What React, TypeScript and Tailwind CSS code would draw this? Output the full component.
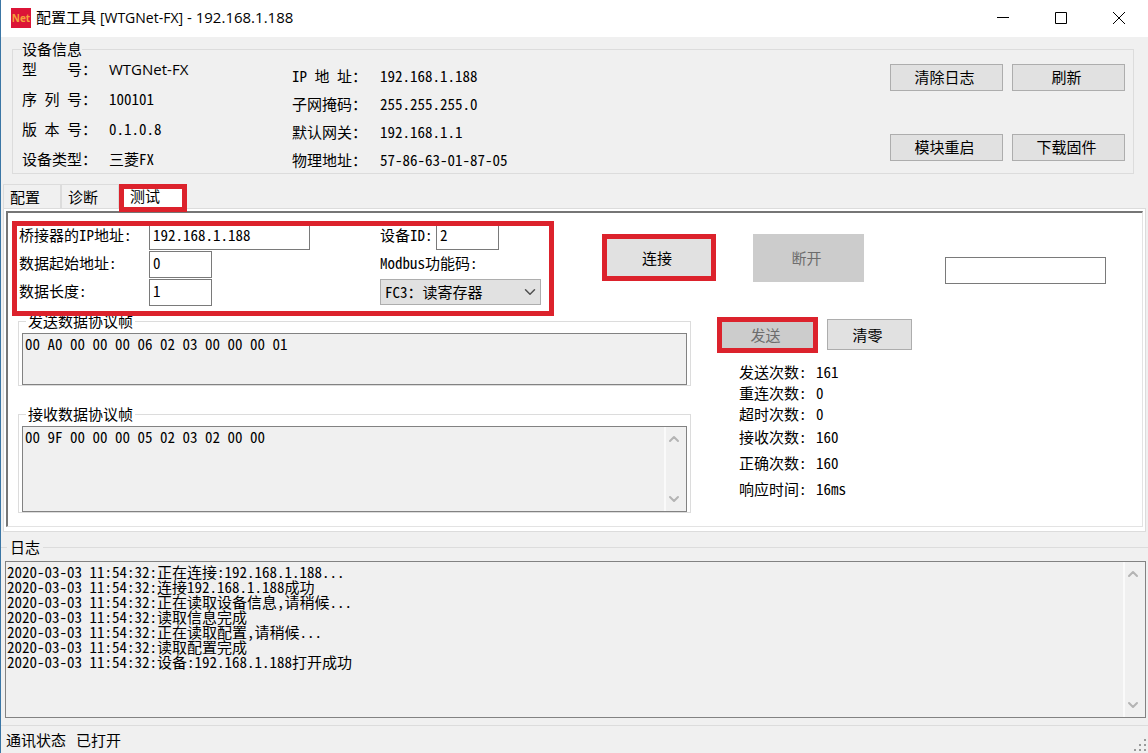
import { useState } from 'react'
import { ChevronDown, ChevronUp } from 'lucide-react'

const deviceLeft = [
  { label: '型    号：', value: 'WTGNet-FX', ui: true },
  { label: '序 列 号：', value: '100101' },
  { label: '版 本 号：', value: '0.1.0.8' },
  { label: '设备类型：', value: '三菱FX' },
]

const deviceRight = [
  { label: 'IP 地 址：', value: '192.168.1.188' },
  { label: '子网掩码：', value: '255.255.255.0' },
  { label: '默认网关：', value: '192.168.1.1' },
  { label: '物理地址：', value: '57-86-63-01-87-05' },
]

const sendStats = [
  { label: '发送次数:', value: '161' },
  { label: '重连次数:', value: '0' },
  { label: '超时次数:', value: '0' },
]

const receiveStats = [
  { label: '接收次数:', value: '160' },
  { label: '正确次数:', value: '160' },
  { label: '响应时间:', value: '16ms' },
]

const logLines = [
  '2020-03-03 11:54:32:正在连接:192.168.1.188...',
  '2020-03-03 11:54:32:连接192.168.1.188成功',
  '2020-03-03 11:54:32:正在读取设备信息,请稍候...',
  '2020-03-03 11:54:32:读取信息完成',
  '2020-03-03 11:54:32:正在读取配置,请稍候...',
  '2020-03-03 11:54:32:读取配置完成',
  '2020-03-03 11:54:32:设备:192.168.1.188打开成功',
]

const inputClass = 'h-[27px] border border-[#7a7a7a] bg-white px-[3px] pb-1 outline-none'
const buttonClass = 'border border-[#adadad] bg-[#e1e1e1] pr-1 hover:bg-[#e5f1fb]'

// Red frame drawn over the part of the window that needs attention
function Highlight() {
  return <span className="pointer-events-none absolute inset-0 z-10 border-[5px] border-[#dc222c]" />
}

function ScrollBar() {
  return (
    <div className="flex w-[22px] shrink-0 flex-col items-center justify-between border-l-2 border-[#fafafa] py-1 pr-1 text-[#b4b4b4]">
      <ChevronUp className="h-4 w-4" strokeWidth={3} />
      <ChevronDown className="h-4 w-4" strokeWidth={3} />
    </div>
  )
}

function Stats({ rows, className }: { rows: { label: string; value: string }[]; className: string }) {
  return (
    <dl className={className}>
      {rows.map((r) => (
        <div key={r.label} className="flex">
          <dt className="w-[77px]">{r.label}</dt>
          <dd>{r.value}</dd>
        </div>
      ))}
    </dl>
  )
}

export default function App() {
  const [tab, setTab] = useState('测试')
  const [ip, setIp] = useState('192.168.1.188')
  const [start, setStart] = useState('0')
  const [length, setLength] = useState('1')
  const [deviceId, setDeviceId] = useState('2')

  return (
    <div className="flex min-h-screen flex-col border-l border-[#3b76a5] bg-[#f0f0f0] text-[15px] leading-5 text-black [font-family:'Noto_Sans_Mono_CJK_SC','Liberation_Mono','Noto_Sans_CJK_SC',monospace]">
      {/* Title bar */}
      <header className="flex h-[37px] items-center bg-white pb-[2px] pl-[10px] [font-family:'Open_Sans','Noto_Sans_CJK_SC',sans-serif]">
        <span className="flex h-5 w-5 items-center justify-center bg-[#dc1437] text-[10px] font-bold text-[#f5a03c]">Net</span>
        <h1 className="ml-[5px] flex-1">
          配置工具 <span className="text-[14px]">[WTGNet-FX]</span> - 192.168.1.188
        </h1>
        <button type="button" aria-label="最小化" className="flex h-full w-[58px] items-center justify-center">
          <svg width="12" height="12" viewBox="0 0 12 12" stroke="black"><path d="M0 5.5H12" /></svg>
        </button>
        <button type="button" aria-label="最大化" className="flex h-full w-[58px] items-center justify-center">
          <svg width="12" height="12" viewBox="0 0 12 12" fill="none" stroke="black"><path d="M.5 .5H11.5V11.5H.5Z" /></svg>
        </button>
        <button type="button" aria-label="关闭" className="flex h-full w-[58px] items-center justify-center">
          <svg width="12" height="12" viewBox="0 0 12 12" stroke="black"><path d="M0 0L12 12M12 0L0 12" /></svg>
        </button>
      </header>

      {/* Device info */}
      <fieldset className="mr-[14px] ml-[11px] mt-[2px] flex h-[135px] border border-[#dcdcdc] pr-2 pl-[9px]">
        <legend>设备信息</legend>
        <dl className="w-[270px] space-y-[10px]">
          {deviceLeft.map((r) => (
            <div key={r.value} className="flex">
              <dt className="w-[87px] whitespace-pre">{r.label}</dt>
              <dd className={r.ui ? "[font-family:'Open_Sans',sans-serif]" : ''}>{r.value}</dd>
            </div>
          ))}
        </dl>
        <dl className="flex-1 space-y-2 pt-[7px]">
          {deviceRight.map((r) => (
            <div key={r.value} className="flex">
              <dt className="w-[88px] whitespace-pre">{r.label}</dt>
              <dd>{r.value}</dd>
            </div>
          ))}
        </dl>
        <div className="grid grid-cols-2 content-start gap-x-[9px] gap-y-[43px] pt-[5px]">
          {['清除日志', '刷新', '模块重启', '下载固件'].map((t) => (
            <button key={t} type="button" className={`${buttonClass} h-[27px] w-[113px] pb-[2px]`}>
              {t}
            </button>
          ))}
        </div>
      </fieldset>

      {/* Tabs */}
      <div role="tablist" className="ml-[2px] mt-[10px] flex h-6">
        {['配置', '诊断', '测试'].map((t) => (
          <button
            key={t}
            type="button"
            role="tab"
            aria-selected={tab === t}
            onClick={() => setTab(t)}
            className={
              tab === t
                ? 'relative -mb-1 w-[68px] bg-white pb-1 pl-[11px] text-left'
                : 'w-[58px] border border-b-0 border-[#dcdcdc] pl-[6px] text-left'
            }
          >
            {t}
            {t === '测试' && <Highlight />}
          </button>
        ))}
      </div>

      <main className="mx-[2px] border border-[#dcdcdc] bg-white p-[2px] pb-1">
        <div className="h-[316px] border-t-2 border-l-2 border-r border-b border-t-[#767676] border-l-[#767676] border-r-[#e3e3e3] border-b-[#e3e3e3] pt-2 pl-1">
          <div className="flex">
            <form className="relative flex h-[95px] w-[542px] justify-between pt-[2px] pr-[13px] pl-[7px]">
              <div className="grid grid-cols-[130px_161px] content-start gap-y-px leading-[27px]">
                <label htmlFor="ip" className="leading-6">桥接器的IP地址:</label>
                <input id="ip" value={ip} onChange={(e) => setIp(e.target.value)} className={inputClass} />
                <label htmlFor="start" className="leading-6">数据起始地址:</label>
                <input id="start" value={start} onChange={(e) => setStart(e.target.value)} className={`${inputClass} w-[63px]`} />
                <label htmlFor="length" className="leading-6">数据长度:</label>
                <input id="length" value={length} onChange={(e) => setLength(e.target.value)} className={`${inputClass} w-[63px]`} />
              </div>
              <div className="w-[161px] space-y-px">
                <div className="flex">
                  <label htmlFor="device" className="w-[56px] leading-6 whitespace-nowrap">设备ID:</label>
                  <input id="device" value={deviceId} onChange={(e) => setDeviceId(e.target.value)} className={`${inputClass} w-[63px]`} />
                </div>
                <label htmlFor="fc" className="block h-[27px] leading-6">Modbus功能码:</label>
                <div className="relative">
                  <select id="fc" className="h-[26px] w-full appearance-none border border-[#adadad] bg-[#e1e1e1] pb-px pl-1">
                    <option>FC3：读寄存器</option>
                    <option>FC4：读输入寄存器</option>
                  </select>
                  <ChevronDown className="pointer-events-none absolute top-1 right-[2px] h-[18px] w-[18px] text-[#505050]" strokeWidth={2} />
                </div>
              </div>
              <Highlight />
            </form>
            <button type="button" className="relative mt-[13px] ml-12 h-[47px] w-[114px] bg-[#e1e1e1] pr-1">
              连接
              <Highlight />
            </button>
            <button type="button" disabled className="mt-[13px] ml-[37px] h-12 w-[111px] bg-[#cccccc] pr-1 text-[#6d6d6d]">
              断开
            </button>
            <input aria-label="结果" className={`${inputClass} mt-9 mr-[36px] ml-auto w-[161px]`} />
          </div>

          <div className="-mt-[5px] flex">
            <div className="ml-[6px] flex-1">
              <fieldset className="border border-[#dcdcdc] px-[3px]">
                <legend className="ml-1 px-[2px]">发送数据协议帧</legend>
                <textarea
                  readOnly
                  aria-label="发送数据协议帧"
                  value="00 A0 00 00 00 06 02 03 00 00 00 01"
                  className="mt-[2px] block h-[52px] w-full resize-none overflow-hidden border border-[#828282] bg-[#f0f0f0] px-[2px] outline-none"
                />
              </fieldset>
              <fieldset className="mt-[18px] border border-[#dcdcdc] px-[3px]">
                <legend className="ml-1 px-[2px]">接收数据协议帧</legend>
                <div className="mt-[2px] flex h-[86px] border border-[#828282] bg-[#f0f0f0]">
                  <textarea
                    readOnly
                    aria-label="接收数据协议帧"
                    value="00 9F 00 00 00 05 02 03 02 00 00"
                    className="flex-1 resize-none overflow-hidden px-[2px] outline-none"
                  />
                  <ScrollBar />
                </div>
              </fieldset>
            </div>
            <div className="ml-[26px] w-[425px] pt-[6px]">
              <div className="flex items-start gap-[9px]">
                <button type="button" disabled className="relative h-9 w-[101px] bg-[#cccccc] pr-1 text-[#6d6d6d]">
                  发送
                  <Highlight />
                </button>
                <button type="button" className={`${buttonClass} mt-[2px] h-[31px] w-[85px]`}>清零</button>
              </div>
              <Stats rows={sendStats} className="mt-[8px] ml-[22px] leading-[21px]" />
              <Stats rows={receiveStats} className="ml-[22px] leading-[26px]" />
            </div>
          </div>
        </div>
      </main>

      {/* Log */}
      <fieldset className="mt-[5px] flex flex-1 flex-col border-t border-[#dcdcdc] pr-[2px] pl-1">
        <legend className="ml-[2px] px-[3px]">日志</legend>
        <div className="mt-1 flex h-[157px] border border-[#828282] bg-[#f0f0f0]">
          <textarea
            readOnly
            aria-label="日志"
            value={logLines.join('\n')}
            className="flex-1 resize-none overflow-hidden px-px py-[2px] leading-[15px] outline-none"
          />
          <ScrollBar />
        </div>
      </fieldset>

      <footer className="flex h-[28px] items-center justify-between border-t border-[#dcdcdc] pl-[5px]">
        <p className="flex gap-[10px]">
          <span>通讯状态</span>
          <span>已打开</span>
        </p>
        <svg width="12" height="12" viewBox="0 0 12 12" fill="#9a9a9a" className="mr-[2px] mb-[2px] self-end">
          <path d="M10 0h2v2h-2zM5 5h2v2h-2zM10 5h2v2h-2zM0 10h2v2h-2zM5 10h2v2h-2zM10 10h2v2h-2z" />
        </svg>
      </footer>
    </div>
  )
}
